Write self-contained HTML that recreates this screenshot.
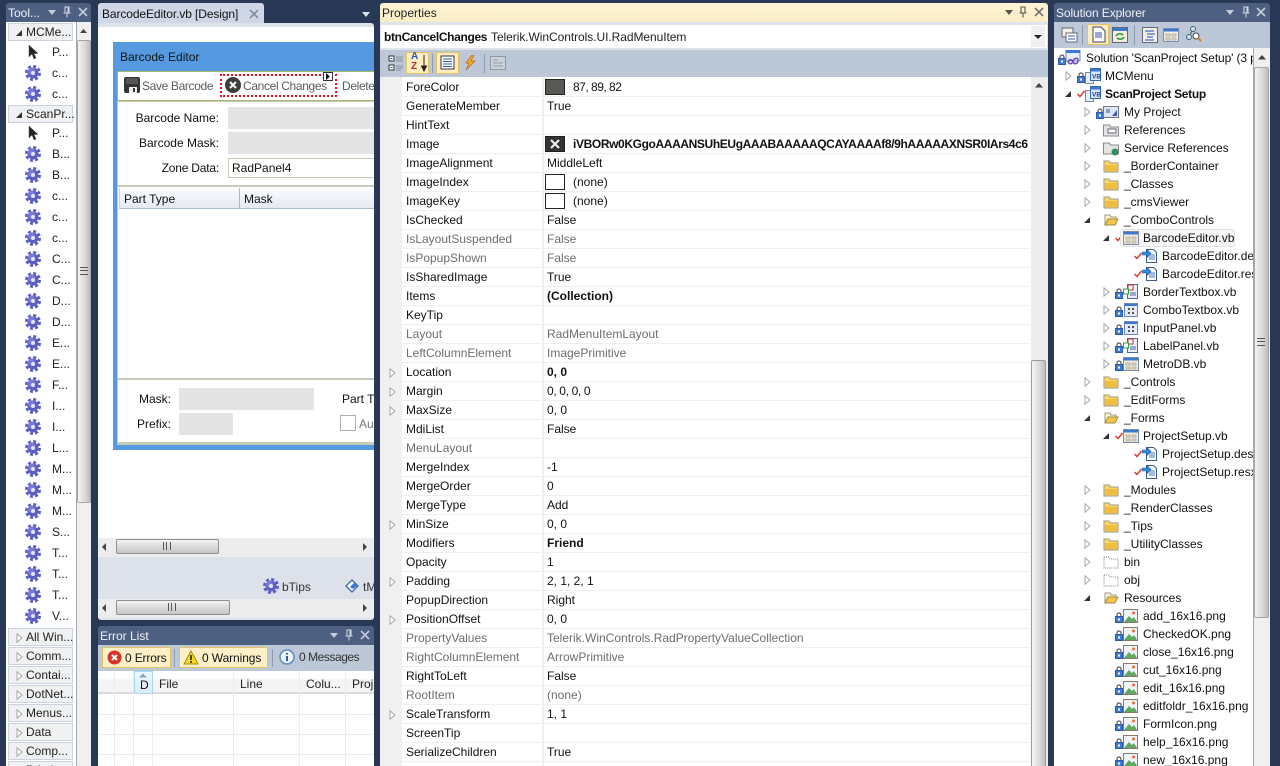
<!DOCTYPE html>
<html><head><meta charset="utf-8"><title>BarcodeEditor</title>
<style>
html,body{margin:0;padding:0;width:1280px;height:766px;overflow:hidden;background:#293955}
body{position:relative;font:12px/16px "Liberation Sans",sans-serif;color:#111}
div,span,svg{position:absolute;box-sizing:border-box}
span{white-space:nowrap}
.tb{background:#4d6082;color:#f0f3f8;height:19px;border-radius:3px 3px 0 0}
.tb span{top:2px}
.hs{left:0;height:19px;background:#ededed}
.th{background:linear-gradient(#f4f4f4,#dcdcdc 45%,#c6c6c6);border:1px solid #8f8f8f;border-radius:2px}
/* toolbox */
.g{left:8px;width:65px;height:18px;background:#f0f1f3;border:1px solid #ccd3e0}
.g span{left:17px;top:0;color:#222}
.it{left:0;width:70px;height:21px}
.it span{left:52px;top:2px;color:#222}
.it svg{left:25px;top:2px}
/* properties */
.r{position:relative;height:19px;border-bottom:1px solid #efefef;width:650px;color:#111}
.r .n{left:26px;top:1px}
.r .v{left:167px;top:1px}
.r .d{left:162px;top:0;width:2px;height:19px;background:#efefef}
.r.q span{color:#6d6d6d}
.r .sw{left:165px;top:1px;width:20px;height:16px;border:1px solid #222;background:#fff}
.r .a{left:9px;top:5px}
/* tree */
.t{position:relative;height:18px;width:200px}
.t span{top:1px;color:#111}
.t svg{top:1px}
.l0 .x{left:32px}.l0 .k{left:4px}.l0 .i{left:11px}
.l1 .x{left:51px}.l1 .e{left:11px;top:4px}.l1 .k{left:23px}.l1 .i{left:31px}
.l2 .x{left:70px}.l2 .e{left:30px;top:4px}.l2 .k{left:42px}.l2 .i{left:49px}
.l3 .x{left:89px}.l3 .e{left:49px;top:4px}.l3 .k{left:61px}.l3 .i{left:69px}
.l4 .x{left:108px}.l4 .k{left:80px}.l4 .i{left:88px}
.f{background:#e4e4e4}
.sep{width:1px;background:#8f9bb0}
.mi{color:#5a5d58;letter-spacing:-.35px}
</style></head><body>
<svg width="0" height="0" style="left:0;top:0"><defs>
<symbol id="gear" viewBox="0 0 16 16"><circle cx="8" cy="8" r="6.500" fill="none" stroke="#5a5cc4" stroke-width="3" stroke-dasharray="2.900 2.200"/><circle cx="8" cy="8" r="5.500" fill="#5c5fc2"/><circle cx="6.500" cy="6" r="3.800" fill="#8789dc" opacity=".65"/><circle cx="8" cy="8" r="2" fill="#e4e5f8"/></symbol>
<symbol id="cur" viewBox="0 0 16 16"><path d="M4 1v12l3-3 2 5 2-1-2-4.500h4z" fill="#222" stroke="#555" stroke-width=".5"/></symbol>
<symbol id="lock" viewBox="0 0 8 11"><path d="M2 5V3a2 2 0 0 1 4 0v2" fill="none" stroke="#555" stroke-width="1.200"/><rect x=".5" y="4.500" width="7" height="6" fill="#3f7bd0" stroke="#2a5aa8"/><rect x="3" y="6.500" width="2" height="2" fill="#fff"/></symbol>
<symbol id="chk" viewBox="0 0 8 8"><path d="M.5 4l2.500 2.500L7.500 1" fill="none" stroke="#d8402a" stroke-width="1.500"/></symbol>
<symbol id="fo" viewBox="0 0 16 16"><path d="M1 3h5l1 2h8v9H1z" fill="#fbd765" stroke="#9a9a8a"/><path d="M2 7h12v6H2z" fill="#f0bd3e"/></symbol>
<symbol id="fop" viewBox="0 0 16 16"><path d="M2 13V3h5l1 2h5v3" fill="#fdf2c4" stroke="#9a9a8a"/><path d="M2 13l3-6h10l-3 6z" fill="#f7c748" stroke="#a08a50"/></symbol>
<symbol id="fd" viewBox="0 0 16 16"><path d="M1 3h5l1 2h8v9H1z" fill="#fff" stroke="#888" stroke-dasharray="1 1"/></symbol>
<symbol id="png" viewBox="0 0 16 16"><rect x=".5" y="1.500" width="14" height="13" fill="#eef4fa" stroke="#8a7a60"/><path d="M1 14l5-6 3 3 2-2 3 5z" fill="#60a860"/><circle cx="10.500" cy="5" r="1.500" fill="#e8703a"/></symbol>
<symbol id="frm" viewBox="0 0 16 16"><rect x=".5" y="1.500" width="15" height="13" fill="#f4efdf" stroke="#7a8aa8"/><rect x="1" y="2" width="14" height="2.500" fill="#3c78d0"/><path d="M3 7h4v2H3zM9 7h4v2H9zM3 11h4v2H3zM9 11h4v2H9z" fill="none" stroke="#9a9a8a" stroke-width=".7"/></symbol>
<symbol id="grd" viewBox="0 0 16 16"><rect x="1.500" y="1.500" width="13" height="13" fill="#e4ebf8" stroke="#6a88c0"/><rect x="2" y="2" width="12" height="2" fill="#3c78d0"/><path d="M5 6h2v2H5zM9 6h2v2H9zM5 10h2v2H5zM9 10h2v2H9z" fill="#555"/></symbol>
<symbol id="ctl" viewBox="0 0 16 16"><rect x="4.500" y=".5" width="10" height="14" fill="#e8eefa" stroke="#4a68a8"/><rect x="5" y="1" width="5" height="5" fill="#fff" stroke="#c83030"/><rect x=".5" y="5" width="5" height="5" fill="#fff" stroke="#30a040"/><path d="M7 9h6M7 11h6" stroke="#4a68a8"/></symbol>
<symbol id="res" viewBox="0 0 16 16"><path d="M4.500 1.500h7l3 3v10h-10z" fill="#fff" stroke="#3a5a90"/><path d="M7 7h6M7 9h6M7 11h6" stroke="#4a78c0"/><path d="M0 4h5V1.500l4 4-4 4V7H0z" fill="#3a8ae0" stroke="#1a5aa8" stroke-width=".6"/></symbol>
<symbol id="vb" viewBox="0 0 16 16"><rect x=".5" y="4.500" width="8" height="11" fill="#e8eefa" stroke="#7a8aa8"/><rect x="5.500" y=".5" width="10" height="12" fill="#d8e6fa" stroke="#3a68b0"/><rect x="6" y="1" width="9" height="2.500" fill="#3c78d0"/><text x="7" y="10.500" font-size="6.500" font-weight="bold" fill="#1a4a9a" font-family="Liberation Sans">VB</text></symbol>
<symbol id="hol" viewBox="0 0 7 10"><path d="M1 .8v8.400L6 5z" fill="#fff" stroke="#a6a6a6"/></symbol>
<symbol id="fil" viewBox="0 0 7 10"><path d="M6 2v6H0z" fill="#333"/></symbol>
<symbol id="pin" viewBox="0 0 10 12"><path d="M3 1h4v6H3zM1.500 7h7M5 7v4.500M6 1.500v5" fill="none" stroke="#d4dbe6" stroke-width="1"/></symbol>
<symbol id="x" viewBox="0 0 10 10"><path d="M1 1l8 8M9 1l-8 8" stroke="#c4ccd8" stroke-width="1.600"/></symbol>
<symbol id="dn" viewBox="0 0 10 6"><path d="M1 0h8L5 5z" fill="#c4ccd8"/></symbol>
</defs></svg>

<!-- TOOLBOX -->
<div class="tb" style="left:6px;top:3px;width:85px">
<span style="left:2px">Tool...</span>
<svg style="left:41px;top:7px" width="10" height="6"><use href="#dn"/></svg>
<svg style="left:56px;top:3px" width="10" height="12"><use href="#pin"/></svg>
<svg style="left:72px;top:4px" width="10" height="10"><use href="#x"/></svg>
</div>
<div style="left:6px;top:22px;width:70px;height:744px;background:#fff"></div>
<div style="left:76px;top:22px;width:15px;height:744px;background:#f0f0f0;border-left:1px solid #a8a8a8">
<svg style="left:3px;top:7px" width="8" height="5"><path d="M0 4h7L3.500 0z" fill="#444"/></svg>
<div style="left:0;top:18px;width:14px;height:463px;background:linear-gradient(90deg,#f4f4f4,#d8d8d8 60%,#bdbdbd);border:1px solid #a5a5a5;border-radius:2px"></div>
<div style="left:3px;top:245px;width:8px;height:8px;border-top:1px solid #555;border-bottom:1px solid #555"></div>
<div style="left:3px;top:248px;width:8px;height:2px;border-top:1px solid #555"></div>
</div>
<div class="g" style="top:23px"><span>MCMe...</span><svg style="left:7px;top:4px" width="7" height="10"><use href="#fil"/></svg></div>
<div class="it" style="top:42px"><svg width="16" height="16"><use href="#cur"/></svg><span>P...</span></div>
<div class="it" style="top:63px"><svg width="16" height="16"><use href="#gear"/></svg><span>c...</span></div>
<div class="it" style="top:84px"><svg width="16" height="16"><use href="#gear"/></svg><span>c...</span></div>
<div class="g" style="top:105px"><span>ScanPr...</span><svg style="left:7px;top:4px" width="7" height="10"><use href="#fil"/></svg></div>
<div class="it" style="top:123px"><svg width="16" height="16"><use href="#cur"/></svg><span>P...</span></div>
<div class="it" style="top:144px"><svg width="16" height="16"><use href="#gear"/></svg><span>B...</span></div>
<div class="it" style="top:165px"><svg width="16" height="16"><use href="#gear"/></svg><span>B...</span></div>
<div class="it" style="top:186px"><svg width="16" height="16"><use href="#gear"/></svg><span>c...</span></div>
<div class="it" style="top:207px"><svg width="16" height="16"><use href="#gear"/></svg><span>c...</span></div>
<div class="it" style="top:228px"><svg width="16" height="16"><use href="#gear"/></svg><span>c...</span></div>
<div class="it" style="top:249px"><svg width="16" height="16"><use href="#gear"/></svg><span>C...</span></div>
<div class="it" style="top:270px"><svg width="16" height="16"><use href="#gear"/></svg><span>C...</span></div>
<div class="it" style="top:291px"><svg width="16" height="16"><use href="#gear"/></svg><span>D...</span></div>
<div class="it" style="top:312px"><svg width="16" height="16"><use href="#gear"/></svg><span>D...</span></div>
<div class="it" style="top:333px"><svg width="16" height="16"><use href="#gear"/></svg><span>E...</span></div>
<div class="it" style="top:354px"><svg width="16" height="16"><use href="#gear"/></svg><span>E...</span></div>
<div class="it" style="top:375px"><svg width="16" height="16"><use href="#gear"/></svg><span>F...</span></div>
<div class="it" style="top:396px"><svg width="16" height="16"><use href="#gear"/></svg><span>I...</span></div>
<div class="it" style="top:417px"><svg width="16" height="16"><use href="#gear"/></svg><span>I...</span></div>
<div class="it" style="top:438px"><svg width="16" height="16"><use href="#gear"/></svg><span>L...</span></div>
<div class="it" style="top:459px"><svg width="16" height="16"><use href="#gear"/></svg><span>M...</span></div>
<div class="it" style="top:480px"><svg width="16" height="16"><use href="#gear"/></svg><span>M...</span></div>
<div class="it" style="top:501px"><svg width="16" height="16"><use href="#gear"/></svg><span>M...</span></div>
<div class="it" style="top:522px"><svg width="16" height="16"><use href="#gear"/></svg><span>S...</span></div>
<div class="it" style="top:543px"><svg width="16" height="16"><use href="#gear"/></svg><span>T...</span></div>
<div class="it" style="top:564px"><svg width="16" height="16"><use href="#gear"/></svg><span>T...</span></div>
<div class="it" style="top:585px"><svg width="16" height="16"><use href="#gear"/></svg><span>T...</span></div>
<div class="it" style="top:606px"><svg width="16" height="16"><use href="#gear"/></svg><span>V...</span></div>
<div class="g" style="top:628px"><span>All Win...</span><svg style="left:7px;top:4px" width="7" height="10"><use href="#hol"/></svg></div>
<div class="g" style="top:647px"><span>Comm...</span><svg style="left:7px;top:4px" width="7" height="10"><use href="#hol"/></svg></div>
<div class="g" style="top:666px"><span>Contai...</span><svg style="left:7px;top:4px" width="7" height="10"><use href="#hol"/></svg></div>
<div class="g" style="top:685px"><span>DotNet...</span><svg style="left:7px;top:4px" width="7" height="10"><use href="#hol"/></svg></div>
<div class="g" style="top:704px"><span>Menus...</span><svg style="left:7px;top:4px" width="7" height="10"><use href="#hol"/></svg></div>
<div class="g" style="top:723px"><span>Data</span><svg style="left:7px;top:4px" width="7" height="10"><use href="#hol"/></svg></div>
<div class="g" style="top:742px"><span>Comp...</span><svg style="left:7px;top:4px" width="7" height="10"><use href="#hol"/></svg></div>
<div class="g" style="top:761px"><span>Printin...</span></div>

<!-- DOCUMENT -->
<div style="left:98px;top:3px;width:166px;height:21px;background:#cfd6e5;border-radius:3px 3px 0 0">
<span style="left:4px;top:3px;letter-spacing:-.1px">BarcodeEditor.vb [Design]</span>
<svg style="left:151px;top:6px" width="10" height="10"><path d="M1 1l8 8M9 1l-8 8" stroke="#7a8494" stroke-width="1.500"/></svg>
</div>
<svg style="left:361px;top:12px" width="10" height="6"><path d="M1 0h8L5 5z" fill="#dfe3ea"/></svg>
<div style="left:98px;top:23px;width:276px;height:597px;background:#dde1ea;border-radius:0 3px 3px 3px;overflow:hidden">
<div style="left:0;top:4px;width:276px;height:511px;background:#fff"></div>
<!-- form -->
<div style="left:15px;top:19px;width:261px;height:408px;background:#559ae0;overflow:hidden">
<span style="left:7px;top:7px;color:#111">Barcode Editor</span>
<div style="left:4px;top:29px;width:257px;height:30px;background:#fff;border-top:1px solid #a8b86c;border-bottom:1px solid #a8b86c;border-left:1px solid #a8b86c"></div>
<div style="left:4px;top:59px;width:257px;height:342px;background:#fff;border:1px solid #c8cbb8;border-right:0">
</div>
</div>
<!-- menu content -->
<svg style="left:26px;top:54px" width="16" height="16"><rect width="16" height="16" rx="2" fill="#333"/><rect x="2" y="1" width="12" height="6" fill="#555"/><rect x="5" y="10" width="8" height="6" fill="#eee"/><rect x="9" y="11" width="2" height="4" fill="#333"/></svg>
<span class="mi" style="left:44px;top:55px">Save Barcode</span>
<div style="left:122px;top:51px;width:117px;height:23px;border:2px dotted #e8101c"></div>
<svg style="left:127px;top:54px" width="16" height="16"><circle cx="8" cy="8" r="8" fill="#3c3c3c"/><path d="M5 5l6 6M11 5l-6 6" stroke="#f2f2f2" stroke-width="2.200"/></svg>
<span class="mi" style="left:145px;top:55px">Cancel Changes</span>
<div style="left:225px;top:49px;width:10px;height:9px;background:#fff;border:1px solid #333"><svg style="left:2px;top:0" width="5" height="7"><path d="M0 0v7l4-3.500z" fill="#111"/></svg></div>
<span class="mi" style="left:244px;top:55px">Delete</span>
<!-- fields -->
<span style="right:155px;top:87px">Barcode Name:</span>
<div class="f" style="left:130px;top:84px;width:146px;height:22px"></div>
<span style="right:155px;top:112px">Barcode Mask:</span>
<div class="f" style="left:130px;top:109px;width:146px;height:22px"></div>
<span style="right:155px;top:137px;letter-spacing:-.2px">Zone Data:</span>
<div style="left:130px;top:135px;width:146px;height:20px;background:#fff;border:1px solid #c8c8b8;border-right:0"><span style="left:3px;top:1px">RadPanel4</span></div>
<div style="left:19px;top:162px;width:257px;height:2px;background:#c8cbb8"></div>
<div style="left:21px;top:165px;width:255px;height:21px;background:linear-gradient(#fbfcfe,#e4e9f2);border-bottom:1px solid #a9bccf;border-left:1px solid #c8d4e0">
<span style="left:4px;top:3px">Part Type</span><div style="left:119px;top:0;width:1px;height:20px;background:#a9bccf"></div><span style="left:124px;top:3px">Mask</span></div>
<div style="left:19px;top:355px;width:257px;height:2px;background:#c8cbb8"></div>
<span style="right:203px;top:368px">Mask:</span>
<div class="f" style="left:81px;top:365px;width:135px;height:22px"></div>
<span style="right:203px;top:393px">Prefix:</span>
<div class="f" style="left:81px;top:390px;width:54px;height:22px"></div>
<span style="left:244px;top:368px">Part Ty</span>
<div style="left:242px;top:392px;width:16px;height:16px;border:1px solid #b0b0b0;background:#fff"></div>
<span style="left:261px;top:393px;color:#777">Au</span>
<div style="left:19px;top:420px;width:257px;height:2px;background:#c8cbb8"></div>
<!-- scrollbars -->
<div class="hs" style="top:515px;width:276px">
<svg style="left:4px;top:5px" width="5" height="8"><path d="M4 0v8L0 4z" fill="#444"/></svg>
<div class="th" style="left:18px;top:1px;width:103px;height:15px"></div>
<div style="left:65px;top:4px;width:8px;height:8px;border-left:1px solid #555;border-right:1px solid #555"></div><div style="left:68px;top:4px;width:2px;height:8px;border-left:1px solid #555"></div>
<svg style="left:265px;top:5px" width="5" height="8"><path d="M0 0v8l4-4z" fill="#444"/></svg>
</div>
<svg style="left:165px;top:555px" width="16" height="16"><use href="#gear"/></svg>
<span style="left:184px;top:556px;color:#333">bTips</span>
<svg style="left:246px;top:555px" width="16" height="16"><path d="M2 8l6-6 6 6-6 6z" fill="#fff" stroke="#3a68b0" stroke-width="1.300"/><path d="M6 9l4-4 3 3-4 3z" fill="#3a78d0"/></svg>
<span style="left:265px;top:556px;color:#333">tM</span>
<div class="hs" style="top:576px;width:276px">
<svg style="left:4px;top:5px" width="5" height="8"><path d="M4 0v8L0 4z" fill="#444"/></svg>
<div class="th" style="left:18px;top:1px;width:114px;height:15px"></div>
<div style="left:70px;top:4px;width:8px;height:8px;border-left:1px solid #555;border-right:1px solid #555"></div><div style="left:73px;top:4px;width:2px;height:8px;border-left:1px solid #555"></div>
<svg style="left:265px;top:5px" width="5" height="8"><path d="M0 0v8l4-4z" fill="#444"/></svg>
</div>
</div>

<!-- ERROR LIST -->
<div class="tb" style="left:98px;top:626px;width:276px">
<span style="left:2px">Error List</span>
<svg style="left:231px;top:7px" width="10" height="6"><use href="#dn"/></svg>
<svg style="left:246px;top:3px" width="10" height="12"><use href="#pin"/></svg>
<svg style="left:262px;top:4px" width="10" height="10"><use href="#x"/></svg>
</div>
<div style="left:98px;top:645px;width:276px;height:26px;background:#bcc7d8">
<div style="left:4px;top:2px;width:69px;height:21px;background:#fff0c8;border:1px solid #e5c365"><svg style="left:4px;top:2px" width="15" height="15"><circle cx="7.500" cy="7.500" r="7" fill="#d8332a"/><path d="M5 5l5 5M10 5l-5 5" stroke="#fff" stroke-width="2"/></svg><span style="left:22px;top:2px;letter-spacing:-.15px">0 Errors</span></div>
<div class="sep" style="left:76px;top:4px;height:18px"></div>
<div style="left:81px;top:2px;width:89px;height:21px;background:#fff0c8;border:1px solid #e5c365"><svg style="left:3px;top:2px" width="16" height="15"><path d="M8 1l7 13H1z" fill="#f8d820" stroke="#a88a10"/><path d="M8 5v5M8 11v2" stroke="#222" stroke-width="1.600"/></svg><span style="left:22px;top:2px;letter-spacing:-.1px">0 Warnings</span></div>
<div class="sep" style="left:174px;top:4px;height:18px"></div>
<svg style="left:181px;top:4px" width="16" height="16"><circle cx="8" cy="8" r="7" fill="#f0f6fc" stroke="#5a8ad0" stroke-width="1.500"/><path d="M8 4v1.500M8 7v5" stroke="#2a5ab0" stroke-width="2"/></svg>
<span style="left:201px;top:4px;color:#333;letter-spacing:-.45px">0 Messages</span>
</div>
<div style="left:98px;top:671px;width:276px;height:95px;background:#fff;overflow:hidden">
<div style="left:0;top:0;width:276px;height:23px;background:linear-gradient(#fff 35%,#f4f4f4 40%);border-bottom:2px solid #dcdcdc"></div>
<div style="left:36px;top:0;width:19px;height:23px;background:linear-gradient(#eef6fc,#dcedf8);border:1px solid #a4d8f4"><svg style="left:3px;top:1px" width="11" height="5"><path d="M1 4.500h8L5 .5z" fill="#7fa6c8"/></svg><span style="left:5px;top:5px">D</span></div>
<span style="left:61px;top:5px;color:#222">File</span><span style="left:142px;top:5px;color:#222">Line</span><span style="left:208px;top:5px;color:#222">Colu...</span><span style="left:254px;top:5px;color:#222">Proj</span>
<div style="left:16px;top:0;width:1px;height:95px;background:#ececec"></div>
<div style="left:35px;top:0;width:1px;height:95px;background:#ececec"></div>
<div style="left:54px;top:23px;width:1px;height:72px;background:#ececec"></div>
<div style="left:135px;top:0;width:1px;height:95px;background:#ececec"></div>
<div style="left:201px;top:0;width:1px;height:95px;background:#ececec"></div>
<div style="left:247px;top:0;width:1px;height:95px;background:#ececec"></div>
<div style="left:0;top:43px;width:276px;height:1px;background:#ececec"></div>
<div style="left:0;top:63px;width:276px;height:1px;background:#ececec"></div>
<div style="left:0;top:83px;width:276px;height:1px;background:#ececec"></div>
</div>

<!-- PROPERTIES -->
<div style="left:380px;top:3px;width:668px;height:19px;background:linear-gradient(#fff4d6,#fbeec6);border-radius:3px 3px 0 0">
<span style="left:2px;top:2px;color:#222">Properties</span>
<svg style="left:624px;top:7px" width="10" height="6"><path d="M1 0h8L5 5z" fill="#555"/></svg>
<svg style="left:638px;top:3px" width="10" height="12"><path d="M3 1h4v6H3zM1.500 7h7M5 7v4.500" fill="none" stroke="#555" stroke-width="1.100"/></svg>
<svg style="left:654px;top:4px" width="10" height="10"><path d="M1 1l8 8M9 1l-8 8" stroke="#777" stroke-width="1.700"/></svg>
</div>
<div style="left:380px;top:22px;width:668px;height:28px;background:#dfe4ec">
<div style="left:1px;top:3px;width:666px;height:23px;background:#fff">
<span style="left:3px;top:4px;font-weight:bold;letter-spacing:-.35px">btnCancelChanges</span>
<span style="left:110px;top:4px;color:#222;letter-spacing:-.06px">Telerik.WinControls.UI.RadMenuItem</span>
<div style="left:650px;top:1px;width:14px;height:21px;background:#f0f0f0"></div>
<svg style="left:653px;top:10px" width="8" height="5"><path d="M0 0h8L4 4z" fill="#222"/></svg>
</div></div>
<div style="left:380px;top:50px;width:668px;height:27px;background:#bcc7d8">
<svg style="left:8px;top:3px" width="16" height="20"><rect x="1" y="3" width="5" height="5" fill="#fff" stroke="#333"/><rect x="1" y="12" width="5" height="5" fill="#fff" stroke="#333"/><path d="M8 4h7M8 6h7M8 8h7M8 13h7M8 15h7M8 17h5" stroke="#8a9098"/><path d="M2.500 5.500h2M2.500 14.500h2" stroke="#2a5ab0"/></svg>
<div style="left:26px;top:2px;width:23px;height:22px;background:#ffeec2;border:1px solid #e5c365"></div>
<span style="left:31px;top:2px;font:bold 10px/10px 'Liberation Sans';color:#2a5ab0">A</span>
<span style="left:31px;top:12px;font:bold 10px/10px 'Liberation Sans';color:#b03030">Z</span>
<svg style="left:41px;top:4px" width="6" height="18"><path d="M3 1v14M.5 12L3 17l2.500-5z" stroke="#222" fill="#222"/></svg>
<div class="sep" style="left:52px;top:4px;height:19px"></div>
<div style="left:56px;top:2px;width:23px;height:22px;background:#ffeec2;border:1px solid #e5c365"></div>
<svg style="left:60px;top:5px" width="15" height="15"><rect x="1" y="1" width="13" height="13" fill="#fff" stroke="#334"/><path d="M3 4h9M3 6.500h9M3 9h9M3 11.500h9" stroke="#2a5ab0"/></svg>
<svg style="left:84px;top:5px" width="12" height="15"><path d="M8 0L2 8h3l-3 7 9-9H7l3-6z" fill="#f0b020" stroke="#c06020" stroke-width=".7"/></svg>
<div class="sep" style="left:104px;top:4px;height:19px"></div>
<svg style="left:110px;top:5px" width="16" height="15"><rect x=".5" y="1.500" width="15" height="13" fill="#ccd2da" stroke="#8f98a5"/><path d="M3 5h5M3 8h10M3 11h10" stroke="#99a"/></svg>
</div>
<div style="left:380px;top:77px;width:652px;height:689px;background:#fff;overflow:hidden">
<div style="left:0;top:0;width:22px;height:689px;background:#f0f0f0"></div>
<div style="left:0;top:1px;height:700px;width:650px;overflow:hidden">
<div class="r"><div class="d"></div><span class="n">ForeColor</span><div class="sw" style="background:#575952"></div><span class="v" style="left:193px;letter-spacing:-.5px">87, 89, 82</span></div>
<div class="r"><div class="d"></div><span class="n">GenerateMember</span><span class="v">True</span></div>
<div class="r"><div class="d"></div><span class="n">HintText</span></div>
<div class="r"><div class="d"></div><span class="n">Image</span><div class="sw" style="background:#333"><svg style="left:3px;top:1px" width="12" height="12"><path d="M2 2l8 8M10 2l-8 8" stroke="#eee" stroke-width="2.200"/></svg></div><span class="v" style="left:193px;font-weight:bold;letter-spacing:-.38px">iVBORw0KGgoAAAANSUhEUgAAABAAAAAQCAYAAAAf8/9hAAAAAXNSR0IArs4c6</span></div>
<div class="r"><div class="d"></div><span class="n">ImageAlignment</span><span class="v">MiddleLeft</span></div>
<div class="r"><div class="d"></div><span class="n">ImageIndex</span><div class="sw"></div><span class="v" style="left:193px">(none)</span></div>
<div class="r"><div class="d"></div><span class="n">ImageKey</span><div class="sw"></div><span class="v" style="left:193px">(none)</span></div>
<div class="r"><div class="d"></div><span class="n">IsChecked</span><span class="v">False</span></div>
<div class="r q"><div class="d"></div><span class="n">IsLayoutSuspended</span><span class="v">False</span></div>
<div class="r q"><div class="d"></div><span class="n">IsPopupShown</span><span class="v">False</span></div>
<div class="r"><div class="d"></div><span class="n">IsSharedImage</span><span class="v">True</span></div>
<div class="r"><div class="d"></div><span class="n">Items</span><span class="v" style="font-weight:bold">(Collection)</span></div>
<div class="r"><div class="d"></div><span class="n">KeyTip</span></div>
<div class="r q"><div class="d"></div><span class="n">Layout</span><span class="v">RadMenuItemLayout</span></div>
<div class="r q"><div class="d"></div><span class="n">LeftColumnElement</span><span class="v">ImagePrimitive</span></div>
<div class="r"><div class="d"></div><svg class="a" width="7" height="10"><use href="#hol"/></svg><span class="n">Location</span><span class="v" style="font-weight:bold">0, 0</span></div>
<div class="r"><div class="d"></div><svg class="a" width="7" height="10"><use href="#hol"/></svg><span class="n">Margin</span><span class="v" style="letter-spacing:-.35px">0, 0, 0, 0</span></div>
<div class="r"><div class="d"></div><svg class="a" width="7" height="10"><use href="#hol"/></svg><span class="n">MaxSize</span><span class="v">0, 0</span></div>
<div class="r"><div class="d"></div><span class="n">MdiList</span><span class="v">False</span></div>
<div class="r q"><div class="d"></div><span class="n">MenuLayout</span></div>
<div class="r"><div class="d"></div><span class="n">MergeIndex</span><span class="v">-1</span></div>
<div class="r"><div class="d"></div><span class="n">MergeOrder</span><span class="v">0</span></div>
<div class="r"><div class="d"></div><span class="n">MergeType</span><span class="v">Add</span></div>
<div class="r"><div class="d"></div><svg class="a" width="7" height="10"><use href="#hol"/></svg><span class="n">MinSize</span><span class="v">0, 0</span></div>
<div class="r"><div class="d"></div><span class="n">Modifiers</span><span class="v" style="font-weight:bold">Friend</span></div>
<div class="r"><div class="d"></div><span class="n">Opacity</span><span class="v">1</span></div>
<div class="r"><div class="d"></div><svg class="a" width="7" height="10"><use href="#hol"/></svg><span class="n">Padding</span><span class="v">2, 1, 2, 1</span></div>
<div class="r"><div class="d"></div><span class="n">PopupDirection</span><span class="v">Right</span></div>
<div class="r"><div class="d"></div><svg class="a" width="7" height="10"><use href="#hol"/></svg><span class="n">PositionOffset</span><span class="v">0, 0</span></div>
<div class="r q"><div class="d"></div><span class="n">PropertyValues</span><span class="v">Telerik.WinControls.RadPropertyValueCollection</span></div>
<div class="r q"><div class="d"></div><span class="n">RightColumnElement</span><span class="v">ArrowPrimitive</span></div>
<div class="r"><div class="d"></div><span class="n">RightToLeft</span><span class="v">False</span></div>
<div class="r q"><div class="d"></div><span class="n">RootItem</span><span class="v">(none)</span></div>
<div class="r"><div class="d"></div><svg class="a" width="7" height="10"><use href="#hol"/></svg><span class="n">ScaleTransform</span><span class="v">1, 1</span></div>
<div class="r"><div class="d"></div><span class="n">ScreenTip</span></div>
<div class="r"><div class="d"></div><span class="n">SerializeChildren</span><span class="v">True</span></div>
<div class="r"><div class="d"></div></div>
</div></div>
<div style="left:1031px;top:77px;width:17px;height:689px;background:#ededed">
<svg style="left:4px;top:6px" width="9" height="5"><path d="M0 4.500h8L4 0z" fill="#444"/></svg>
<div style="left:0;top:283px;width:15px;height:420px;background:linear-gradient(90deg,#f4f4f4,#dcdcdc 55%,#bfbfbf);border:1px solid #9a9a9a;border-radius:2px"></div>
</div>

<!-- SOLUTION EXPLORER -->
<div class="tb" style="left:1054px;top:3px;width:216px">
<span style="left:2px;letter-spacing:-.1px">Solution Explorer</span>
<svg style="left:171px;top:7px" width="10" height="6"><use href="#dn"/></svg>
<svg style="left:187px;top:3px" width="10" height="12"><use href="#pin"/></svg>
<svg style="left:202px;top:4px" width="10" height="10"><use href="#x"/></svg>
</div>
<div style="left:1054px;top:22px;width:216px;height:26px;background:#bcc7d8">
<svg style="left:7px;top:5px" width="17" height="16"><rect x="1" y="1" width="11" height="9" fill="#f4efdf" stroke="#667"/><rect x="5" y="6" width="11" height="9" fill="#fff" stroke="#667"/><path d="M7 9h7M7 12h7" stroke="#35a"/></svg>
<div class="sep" style="left:28px;top:3px;height:20px"></div>
<div style="left:33px;top:2px;width:22px;height:21px;background:#ffeec2;border:1px solid #e5c365"></div>
<svg style="left:37px;top:4px" width="16" height="17"><path d="M2 1h8l4 4v11H2z" fill="#fff" stroke="#445"/><path d="M4 7h7M4 9h7M4 11h7" stroke="#35a"/></svg>
<svg style="left:58px;top:5px" width="16" height="16"><rect x=".5" y=".5" width="15" height="15" fill="#f4efdf" stroke="#667"/><rect x="1" y="1" width="14" height="3" fill="#3c78d0"/><path d="M4 9a4 3 0 0 1 7-1M12 10a4 3 0 0 1-7 1" fill="none" stroke="#2a9a30" stroke-width="1.600"/></svg>
<div class="sep" style="left:80px;top:3px;height:20px"></div>
<svg style="left:88px;top:5px" width="16" height="16"><rect x=".5" y=".5" width="15" height="15" fill="#f4efdf" stroke="#667"/><path d="M3 4h9M5 7h8M5 10h6M3 13h9" stroke="#1a4ad0"/></svg>
<svg style="left:109px;top:5px" width="16" height="16"><use href="#frm"/></svg>
<svg style="left:131px;top:4px" width="17" height="17"><circle cx="4" cy="11" r="2.500" fill="#cfe0f4" stroke="#467"/><circle cx="8" cy="3" r="2.500" fill="#cfe0f4" stroke="#467"/><path d="M5 9l2-4" stroke="#467"/><circle cx="11" cy="10" r="3" fill="#fff" stroke="#445"/><path d="M13 12l3 3" stroke="#d08020" stroke-width="2"/></svg>
</div>
<div style="left:1054px;top:48px;width:199px;height:718px;background:#fff;overflow:hidden">
<div style="left:0;top:1px;width:199px;height:720px">
<div class="t l0"><svg class="k" width="8" height="11" style="top:5px"><use href="#lock"/></svg><svg class="i" width="16" height="16"><rect x="1" y="0" width="14" height="11" fill="#e8eefa" stroke="#6a88c0"/><rect x="1" y="0" width="14" height="3" fill="#3c78d0"/><path d="M3 12c2-4 4-2 5 0s4 3 5-1-4-3-5 0-3 4-5 1z" fill="none" stroke="#6a40b0" stroke-width="1.400"/></svg><span class="x" style="letter-spacing:-.12px">Solution 'ScanProject Setup' (3 p</span></div>
<div class="t l1"><svg class="e" width="7" height="10"><use href="#hol"/></svg><svg class="k" width="8" height="11" style="top:5px"><use href="#lock"/></svg><svg class="i" width="16" height="16"><use href="#vb"/></svg><span class="x">MCMenu</span></div>
<div class="t l1"><svg class="e" width="7" height="10"><use href="#fil"/></svg><svg class="k" width="8" height="8" style="top:5px"><use href="#chk"/></svg><svg class="i" width="16" height="16"><use href="#vb"/></svg><span class="x" style="font-weight:bold;letter-spacing:-.3px">ScanProject Setup</span></div>
<div class="t l2"><svg class="e" width="7" height="10"><use href="#hol"/></svg><svg class="k" width="8" height="11" style="top:5px"><use href="#lock"/></svg><svg class="i" width="16" height="16"><rect x=".5" y="2.500" width="15" height="11" fill="#e0e6f0" stroke="#778"/><path d="M9 12l5-6v6z" fill="#3060c0"/><path d="M3 6h4M3 8h4" stroke="#35a"/></svg><span class="x">My Project</span></div>
<div class="t l2"><svg class="e" width="7" height="10"><use href="#hol"/></svg><svg class="i" width="16" height="16"><path d="M.5 3h6l1 2h8v9H.5z" fill="#e4e4e4" stroke="#888"/><rect x="5" y="7" width="8" height="4" fill="#fff" stroke="#667"/></svg><span class="x">References</span></div>
<div class="t l2"><svg class="e" width="7" height="10"><use href="#hol"/></svg><svg class="i" width="16" height="16"><path d="M.5 3h6l1 2h8v9H.5z" fill="#e4e4e4" stroke="#888"/><circle cx="12" cy="12" r="3.500" fill="#3a8a60"/></svg><span class="x">Service References</span></div>
<div class="t l2"><svg class="e" width="7" height="10"><use href="#hol"/></svg><svg class="i" width="16" height="16"><use href="#fo"/></svg><span class="x">_BorderContainer</span></div>
<div class="t l2"><svg class="e" width="7" height="10"><use href="#hol"/></svg><svg class="i" width="16" height="16"><use href="#fo"/></svg><span class="x">_Classes</span></div>
<div class="t l2"><svg class="e" width="7" height="10"><use href="#hol"/></svg><svg class="i" width="16" height="16"><use href="#fo"/></svg><span class="x">_cmsViewer</span></div>
<div class="t l2"><svg class="e" width="7" height="10"><use href="#fil"/></svg><svg class="i" width="16" height="16"><use href="#fop"/></svg><span class="x">_ComboControls</span></div>
<div class="t l3"><svg class="e" width="7" height="10"><use href="#fil"/></svg><svg class="k" width="8" height="8" style="top:5px"><use href="#chk"/></svg><div style="left:66px;top:0;width:115px;height:18px;background:#f6f6f6;border:1px solid #e0e0e0;border-radius:3px"></div><svg class="i" width="16" height="16"><use href="#frm"/></svg><span class="x">BarcodeEditor.vb</span></div>
<div class="t l4"><svg class="k" width="8" height="8" style="top:5px"><use href="#chk"/></svg><svg class="i" width="16" height="16"><use href="#res"/></svg><span class="x">BarcodeEditor.designer.vb</span></div>
<div class="t l4"><svg class="k" width="8" height="8" style="top:5px"><use href="#chk"/></svg><svg class="i" width="16" height="16"><use href="#res"/></svg><span class="x">BarcodeEditor.resx</span></div>
<div class="t l3"><svg class="e" width="7" height="10"><use href="#hol"/></svg><svg class="k" width="8" height="11" style="top:5px"><use href="#lock"/></svg><svg class="i" width="16" height="16"><use href="#ctl"/></svg><span class="x">BorderTextbox.vb</span></div>
<div class="t l3"><svg class="e" width="7" height="10"><use href="#hol"/></svg><svg class="k" width="8" height="11" style="top:5px"><use href="#lock"/></svg><svg class="i" width="16" height="16"><use href="#grd"/></svg><span class="x">ComboTextbox.vb</span></div>
<div class="t l3"><svg class="e" width="7" height="10"><use href="#hol"/></svg><svg class="k" width="8" height="11" style="top:5px"><use href="#lock"/></svg><svg class="i" width="16" height="16"><use href="#grd"/></svg><span class="x">InputPanel.vb</span></div>
<div class="t l3"><svg class="e" width="7" height="10"><use href="#hol"/></svg><svg class="k" width="8" height="11" style="top:5px"><use href="#lock"/></svg><svg class="i" width="16" height="16"><use href="#ctl"/></svg><span class="x">LabelPanel.vb</span></div>
<div class="t l3"><svg class="e" width="7" height="10"><use href="#hol"/></svg><svg class="k" width="8" height="11" style="top:5px"><use href="#lock"/></svg><svg class="i" width="16" height="16"><use href="#frm"/></svg><span class="x">MetroDB.vb</span></div>
<div class="t l2"><svg class="e" width="7" height="10"><use href="#hol"/></svg><svg class="i" width="16" height="16"><use href="#fo"/></svg><span class="x">_Controls</span></div>
<div class="t l2"><svg class="e" width="7" height="10"><use href="#hol"/></svg><svg class="i" width="16" height="16"><use href="#fo"/></svg><span class="x">_EditForms</span></div>
<div class="t l2"><svg class="e" width="7" height="10"><use href="#fil"/></svg><svg class="i" width="16" height="16"><use href="#fop"/></svg><span class="x">_Forms</span></div>
<div class="t l3"><svg class="e" width="7" height="10"><use href="#fil"/></svg><svg class="k" width="8" height="8" style="top:5px"><use href="#chk"/></svg><svg class="i" width="16" height="16"><use href="#frm"/></svg><span class="x">ProjectSetup.vb</span></div>
<div class="t l4"><svg class="k" width="8" height="8" style="top:5px"><use href="#chk"/></svg><svg class="i" width="16" height="16"><use href="#res"/></svg><span class="x">ProjectSetup.designer.vb</span></div>
<div class="t l4"><svg class="k" width="8" height="8" style="top:5px"><use href="#chk"/></svg><svg class="i" width="16" height="16"><use href="#res"/></svg><span class="x">ProjectSetup.resx</span></div>
<div class="t l2"><svg class="e" width="7" height="10"><use href="#hol"/></svg><svg class="i" width="16" height="16"><use href="#fo"/></svg><span class="x">_Modules</span></div>
<div class="t l2"><svg class="e" width="7" height="10"><use href="#hol"/></svg><svg class="i" width="16" height="16"><use href="#fo"/></svg><span class="x">_RenderClasses</span></div>
<div class="t l2"><svg class="e" width="7" height="10"><use href="#hol"/></svg><svg class="i" width="16" height="16"><use href="#fo"/></svg><span class="x">_Tips</span></div>
<div class="t l2"><svg class="e" width="7" height="10"><use href="#hol"/></svg><svg class="i" width="16" height="16"><use href="#fo"/></svg><span class="x">_UtilityClasses</span></div>
<div class="t l2"><svg class="e" width="7" height="10"><use href="#hol"/></svg><svg class="i" width="16" height="16"><use href="#fd"/></svg><span class="x">bin</span></div>
<div class="t l2"><svg class="e" width="7" height="10"><use href="#hol"/></svg><svg class="i" width="16" height="16"><use href="#fd"/></svg><span class="x">obj</span></div>
<div class="t l2"><svg class="e" width="7" height="10"><use href="#fil"/></svg><svg class="i" width="16" height="16"><use href="#fop"/></svg><span class="x">Resources</span></div>
<div class="t l3"><svg class="k" width="8" height="11" style="top:5px"><use href="#lock"/></svg><svg class="i" width="16" height="16"><use href="#png"/></svg><span class="x">add_16x16.png</span></div>
<div class="t l3"><svg class="k" width="8" height="11" style="top:5px"><use href="#lock"/></svg><svg class="i" width="16" height="16"><use href="#png"/></svg><span class="x">CheckedOK.png</span></div>
<div class="t l3"><svg class="k" width="8" height="11" style="top:5px"><use href="#lock"/></svg><svg class="i" width="16" height="16"><use href="#png"/></svg><span class="x">close_16x16.png</span></div>
<div class="t l3"><svg class="k" width="8" height="11" style="top:5px"><use href="#lock"/></svg><svg class="i" width="16" height="16"><use href="#png"/></svg><span class="x">cut_16x16.png</span></div>
<div class="t l3"><svg class="k" width="8" height="11" style="top:5px"><use href="#lock"/></svg><svg class="i" width="16" height="16"><use href="#png"/></svg><span class="x">edit_16x16.png</span></div>
<div class="t l3"><svg class="k" width="8" height="11" style="top:5px"><use href="#lock"/></svg><svg class="i" width="16" height="16"><use href="#png"/></svg><span class="x">editfoldr_16x16.png</span></div>
<div class="t l3"><svg class="k" width="8" height="11" style="top:5px"><use href="#lock"/></svg><svg class="i" width="16" height="16"><use href="#png"/></svg><span class="x">FormIcon.png</span></div>
<div class="t l3"><svg class="k" width="8" height="11" style="top:5px"><use href="#lock"/></svg><svg class="i" width="16" height="16"><use href="#png"/></svg><span class="x">help_16x16.png</span></div>
<div class="t l3"><svg class="k" width="8" height="11" style="top:5px"><use href="#lock"/></svg><svg class="i" width="16" height="16"><use href="#png"/></svg><span class="x">new_16x16.png</span></div>
</div></div>
<div style="left:1253px;top:48px;width:17px;height:718px;background:#f0f0f0;border-left:1px solid #a8a8a8">
<svg style="left:4px;top:7px" width="9" height="5"><path d="M0 4.500h8L4 0z" fill="#444"/></svg>
<div style="left:0;top:19px;width:15px;height:551px;background:linear-gradient(90deg,#f4f4f4,#d8d8d8 60%,#bdbdbd);border:1px solid #a5a5a5;border-radius:2px"></div>
<div style="left:3px;top:290px;width:8px;height:8px;border-top:1px solid #555;border-bottom:1px solid #555"></div>
<div style="left:3px;top:293px;width:8px;height:2px;border-top:1px solid #555"></div>
</div>
</body></html>
